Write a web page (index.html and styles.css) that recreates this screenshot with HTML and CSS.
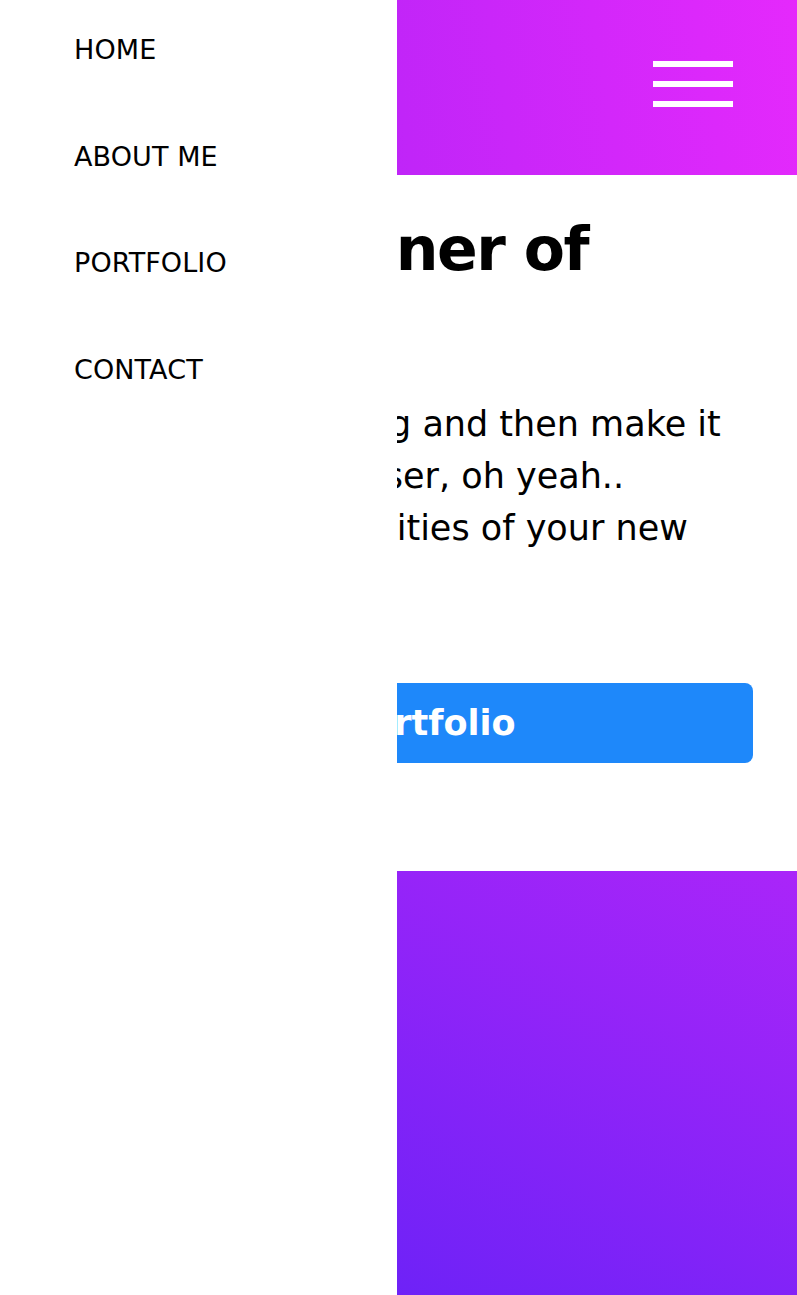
FILE: index.html
```html
<!DOCTYPE html>
<html lang="en">
<head>
<meta charset="utf-8">
<title>Designer of things</title>
<link rel="stylesheet" href="styles.css">
</head>
<body>
<nav class="sidebar">
  <ul class="sidebar__list">
    <li><a href="#" class="sidebar__link">HOME</a></li>
    <li><a href="#" class="sidebar__link">ABOUT ME</a></li>
    <li><a href="#" class="sidebar__link">PORTFOLIO</a></li>
    <li><a href="#" class="sidebar__link">CONTACT</a></li>
  </ul>
</nav>
<div class="page">
  <header class="topbar">
    <button class="burger" aria-label="Menu">
      <span class="burger__bar"></span>
      <span class="burger__bar"></span>
      <span class="burger__bar"></span>
    </button>
  </header>
  <main class="intro">
    <h1 class="intro__title">I'm a designer of things</h1>
    <p class="intro__text">We shape something and then make it work in a web browser, oh yeah.. Imagine the possibilities of your new project.</p>
    <a href="#" class="intro__button">My portfolio</a>
  </main>
  <section class="showcase"></section>
</div>
</body>
</html>
```
FILE: styles.css
```css
* { box-sizing: border-box; }

html, body {
  margin: 0;
  padding: 0;
}

body {
  font-family: "DejaVu Sans", "Liberation Sans", sans-serif;
  color: #000;
  background: #fff;
}

.sidebar {
  position: fixed;
  top: 0;
  left: 0;
  bottom: 0;
  width: 397px;
  background: #fff;
  z-index: 10;
}

.sidebar__list {
  list-style: none;
  margin: 0;
  padding: 37px 0 0 74px;
  display: flex;
  flex-direction: column;
  gap: 80.5px;
}

.sidebar__link {
  display: block;
  font-size: 27px;
  line-height: 26px;
  letter-spacing: 0.1px;
  color: #000;
  text-decoration: none;
}

.page {
  display: flex;
  flex-direction: column;
  min-height: 1295px;
}

.topbar {
  height: 175px;
  background: linear-gradient(80deg, #9c20f3 0%, #c125f8 50%, #e529fc 100%);
  display: flex;
  justify-content: flex-end;
  align-items: flex-start;
  padding: 61px 64px 0 0;
}

.burger {
  display: flex;
  flex-direction: column;
  gap: 14px;
  padding: 0;
  border: 0;
  background: none;
  cursor: pointer;
}

.burger__bar {
  display: block;
  width: 80px;
  height: 6px;
  background: #fff;
}

.intro {
  background: #fff;
  padding: 38px 44px 108px;
  display: flex;
  flex-direction: column;
}

.intro__title {
  margin: 0;
  font-size: 60px;
  line-height: 72px;
  font-weight: 700;
  letter-spacing: -1.5px;
}

.intro__text {
  margin: 41px 0 0;
  font-size: 35px;
  line-height: 52px;
  color: #000;
}

.intro__button {
  margin-top: 77px;
  height: 80px;
  border-radius: 8px;
  background: #1e88fa;
  color: #fff;
  font-size: 35px;
  font-weight: 700;
  text-decoration: none;
  display: flex;
  align-items: center;
  justify-content: center;
  padding-right: 6px;
}

.showcase {
  flex: 1;
  min-height: 424px;
  background: linear-gradient(to top right, #5a21f6, #aa25f9);
}
```
